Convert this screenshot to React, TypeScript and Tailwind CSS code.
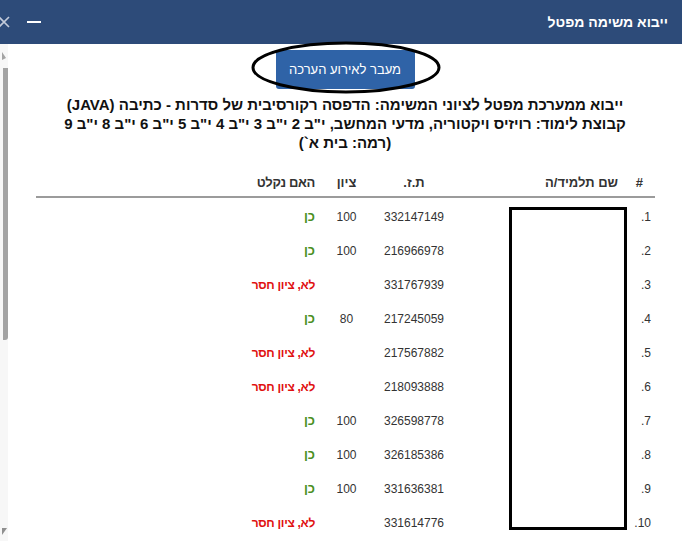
import React from 'react';

type Row = {
  num: number;
  id: string;
  score: string;
  ok: boolean;
};

const rows: Row[] = [
  { num: 1, id: '332147149', score: '100', ok: true },
  { num: 2, id: '216966978', score: '100', ok: true },
  { num: 3, id: '331767939', score: '', ok: false },
  { num: 4, id: '217245059', score: '80', ok: true },
  { num: 5, id: '217567882', score: '', ok: false },
  { num: 6, id: '218093888', score: '', ok: false },
  { num: 7, id: '326598778', score: '100', ok: true },
  { num: 8, id: '326185386', score: '100', ok: true },
  { num: 9, id: '331636381', score: '100', ok: true },
  { num: 10, id: '331614776', score: '', ok: false },
];

function Scrollbar() {
  return (
    <div className="flex w-[8px] shrink-0 flex-col items-start bg-[#f7f7f7]">
      <svg width="6" height="10" viewBox="0 0 6 10" className="mt-[6px]">
        <path d="M0 10 L0 2 L4 8 Z" fill="#a3a3a3" />
      </svg>
      <div className="mt-[8px] h-[272px] w-[5px] rounded-br-[3px] bg-[#a3a3a3]" />
      <div className="flex-1" />
      <svg width="6" height="8" viewBox="0 0 6 8" className="mb-[5px]">
        <path d="M0 0 L5 0 L0 7 Z" fill="#8f8f8f" />
      </svg>
    </div>
  );
}

export default function App() {
  return (
    <div
      dir="rtl"
      className="relative h-[541px] w-[682px] overflow-hidden bg-white text-[#222]"
      style={{ fontFamily: '"Liberation Sans", Arial, sans-serif' }}
    >
      <header className="flex h-[44px] items-center justify-between bg-[#2d4b79] pr-[14px]">
        <h1 className="text-[14px] font-bold text-white">ייבוא משימה מפטל</h1>
        <div className="flex h-full items-center gap-[17px]" dir="ltr">
          <svg width="12" height="12" viewBox="0 0 12 12" className="-ml-[2px]">
            <path d="M1 1 L11 11 M11 1 L1 11" stroke="#c3cbda" strokeWidth="1.6" />
          </svg>
          <div className="h-[2px] w-[14px] bg-white" />
        </div>
      </header>

      <div className="flex h-[497px]">
        <main className="flex min-w-0 flex-1 flex-col">
          <div className="flex justify-center pt-[6px]">
            <button
              type="button"
              className="h-[39px] w-[139px] rounded-[3px] bg-[#2f63a7] text-[13px] text-white"
            >
              מעבר לאירוע הערכה
            </button>
          </div>

          <div className="mt-[6px] text-center text-[15px] font-bold leading-[19px] text-[#111]">
            <p className="whitespace-nowrap">
              ייבוא ממערכת מפטל לציוני המשימה: הדפסה רקורסיבית של סדרות - כתיבה (JAVA)
            </p>
            <p className="whitespace-nowrap">
              קבוצת לימוד: רויזיס ויקטוריה, מדעי המחשב, י"ב 2 י"ב 3 י"ב 4 י"ב 5 י"ב 6 י"ב 8 י"ב 9
            </p>
            <p className="whitespace-nowrap">(רמה: בית א`)</p>
          </div>

          <div className="relative mr-[27px] ml-[28px] mt-[17px] text-[12px]">
            <div className="flex h-[29px] items-center border-b-2 border-[#9b9b9b] text-[13px] font-bold text-[#333]">
              <div className="w-[25px] pr-[12px] text-right">#</div>
              <div className="w-[170px] pr-[12px] text-right">שם תלמיד/ה</div>
              <div className="w-[92px] text-center">ת.ז.</div>
              <div className="w-[43px] text-center">ציון</div>
              <div className="pr-[10px] text-right tracking-tight">האם נקלט</div>
            </div>

            <div className="pt-[2px]">
              {rows.map((r) => (
                <div key={r.num} className="flex h-[34px] items-center text-[#333]">
                  <div className="w-[25px] pr-[4px] text-right" dir="ltr">
                    .{r.num}
                  </div>
                  <div className="w-[170px]" />
                  <div className="w-[92px] text-center">{r.id}</div>
                  <div className="w-[43px] text-center">{r.score}</div>
                  <div className="pr-[10px] text-right">
                    {r.ok ? (
                      <span className="text-[13px] font-bold text-[#4b8f1f]">כן</span>
                    ) : (
                      <span className="font-bold tracking-tight text-[#e01010]">לא, ציון חסר</span>
                    )}
                  </div>
                </div>
              ))}
            </div>

            <div className="absolute top-[38px] right-[28px] h-[323px] w-[118px] border-[3px] border-black" />
          </div>
        </main>
        <Scrollbar />
      </div>

      <svg
        className="pointer-events-none absolute top-[40px] left-[250px]"
        width="194"
        height="56"
        viewBox="0 0 194 56"
      >
        <ellipse cx="96" cy="27.5" rx="93" ry="24.5" fill="none" stroke="#000" strokeWidth="3" />
      </svg>
    </div>
  );
}
